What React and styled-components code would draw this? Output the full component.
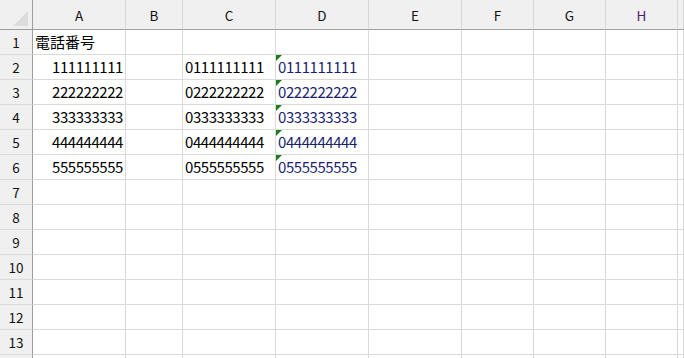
import React from "react";
import styled, { createGlobalStyle } from "styled-components";

const GlobalStyle = createGlobalStyle`
  html, body {
    margin: 0;
    padding: 0;
    background: #ffffff;
    overflow: hidden;
  }
  body {
    font-family: "Noto Sans CJK JP", "Noto Sans", sans-serif;
  }
`;

// I is only a sliver at the right edge, so its header has no label
const COLUMNS = ["A", "B", "C", "D", "E", "F", "G", "H", "I"];
const ROW_COUNT = 14;

const rows = {
  1: { A: { text: "電話番号" } },
  2: { A: { text: "111111111", num: true }, C: { text: "0111111111" }, D: { text: "0111111111", flag: true } },
  3: { A: { text: "222222222", num: true }, C: { text: "0222222222" }, D: { text: "0222222222", flag: true } },
  4: { A: { text: "333333333", num: true }, C: { text: "0333333333" }, D: { text: "0333333333", flag: true } },
  5: { A: { text: "444444444", num: true }, C: { text: "0444444444" }, D: { text: "0444444444", flag: true } },
  6: { A: { text: "555555555", num: true }, C: { text: "0555555555" }, D: { text: "0555555555", flag: true } },
};

const App = () => {
  return (
    <>
      <GlobalStyle />
      <Sheet>
        <Corner>
          <CornerMark />
        </Corner>
        {COLUMNS.map((c) => (
          <ColHeader key={c} $hl={c === "H"}>
            {c === "I" ? "" : c}
          </ColHeader>
        ))}
        {Array.from({ length: ROW_COUNT }, (_, i) => i + 1).map((r) => (
          <React.Fragment key={r}>
            <RowHeader>{r < ROW_COUNT ? r : ""}</RowHeader>
            {COLUMNS.map((c) => {
              const cell = rows[r] && rows[r][c];
              return (
                <Cell
                  key={c}
                  $right={cell && cell.num}
                  $flag={cell && cell.flag}
                  $digits={cell && /^\d+$/.test(cell.text)}
                >
                  {cell ? cell.text : ""}
                </Cell>
              );
            })}
          </React.Fragment>
        ))}
      </Sheet>
    </>
  );
};

export default App;

const Sheet = styled.div`
  display: grid;
  grid-template-columns: 33px 93px 57px 93px 93px 93px 72px 72px 72px 1fr;
  grid-template-rows: 30px repeat(${ROW_COUNT}, 25px);
  width: 684px;
  height: 358px;
  overflow: hidden;
  font-size: 15px;
  color: #000;
`;

const Corner = styled.div`
  position: relative;
  background: #f0f0f0;
  border-right: 1px solid #9e9e9e;
  border-bottom: 1px solid #9e9e9e;
`;

const CornerMark = styled.div`
  position: absolute;
  right: 4px;
  bottom: 3px;
  width: 0;
  height: 0;
  border-left: 15px solid transparent;
  border-bottom: 15px solid #dcdcdc;
`;

const ColHeader = styled.div`
  display: flex;
  align-items: center;
  justify-content: center;
  background: #f0f0f0;
  border-right: 1px solid #d6d6d6;
  border-bottom: 1px solid #9e9e9e;
  font-size: 13.5px;
  color: ${(p) => (p.$hl ? "#4a1f68" : "#111")};
`;

const RowHeader = styled.div`
  display: flex;
  align-items: center;
  justify-content: center;
  background: #f0f0f0;
  border-right: 1px solid #9e9e9e;
  border-bottom: 1px solid #dadada;
  font-size: 13.5px;
  color: #111;
`;

const Cell = styled.div`
  position: relative;
  display: flex;
  align-items: center;
  justify-content: ${(p) => (p.$right ? "flex-end" : "flex-start")};
  padding: 0 2px;
  border-right: 1px solid #dadada;
  border-bottom: 1px solid #dadada;
  white-space: nowrap;
  overflow: visible;
  line-height: 24px;
  letter-spacing: ${(p) => (p.$digits ? "-0.45px" : "0")};
  color: ${(p) => (p.$flag ? "#1c1f6e" : "#000")};

  &::before {
    content: "";
    display: ${(p) => (p.$flag ? "block" : "none")};
    position: absolute;
    left: 0;
    top: 0;
    width: 0;
    height: 0;
    border-top: 6px solid #1a7d1a;
    border-right: 6px solid transparent;
  }
`;
